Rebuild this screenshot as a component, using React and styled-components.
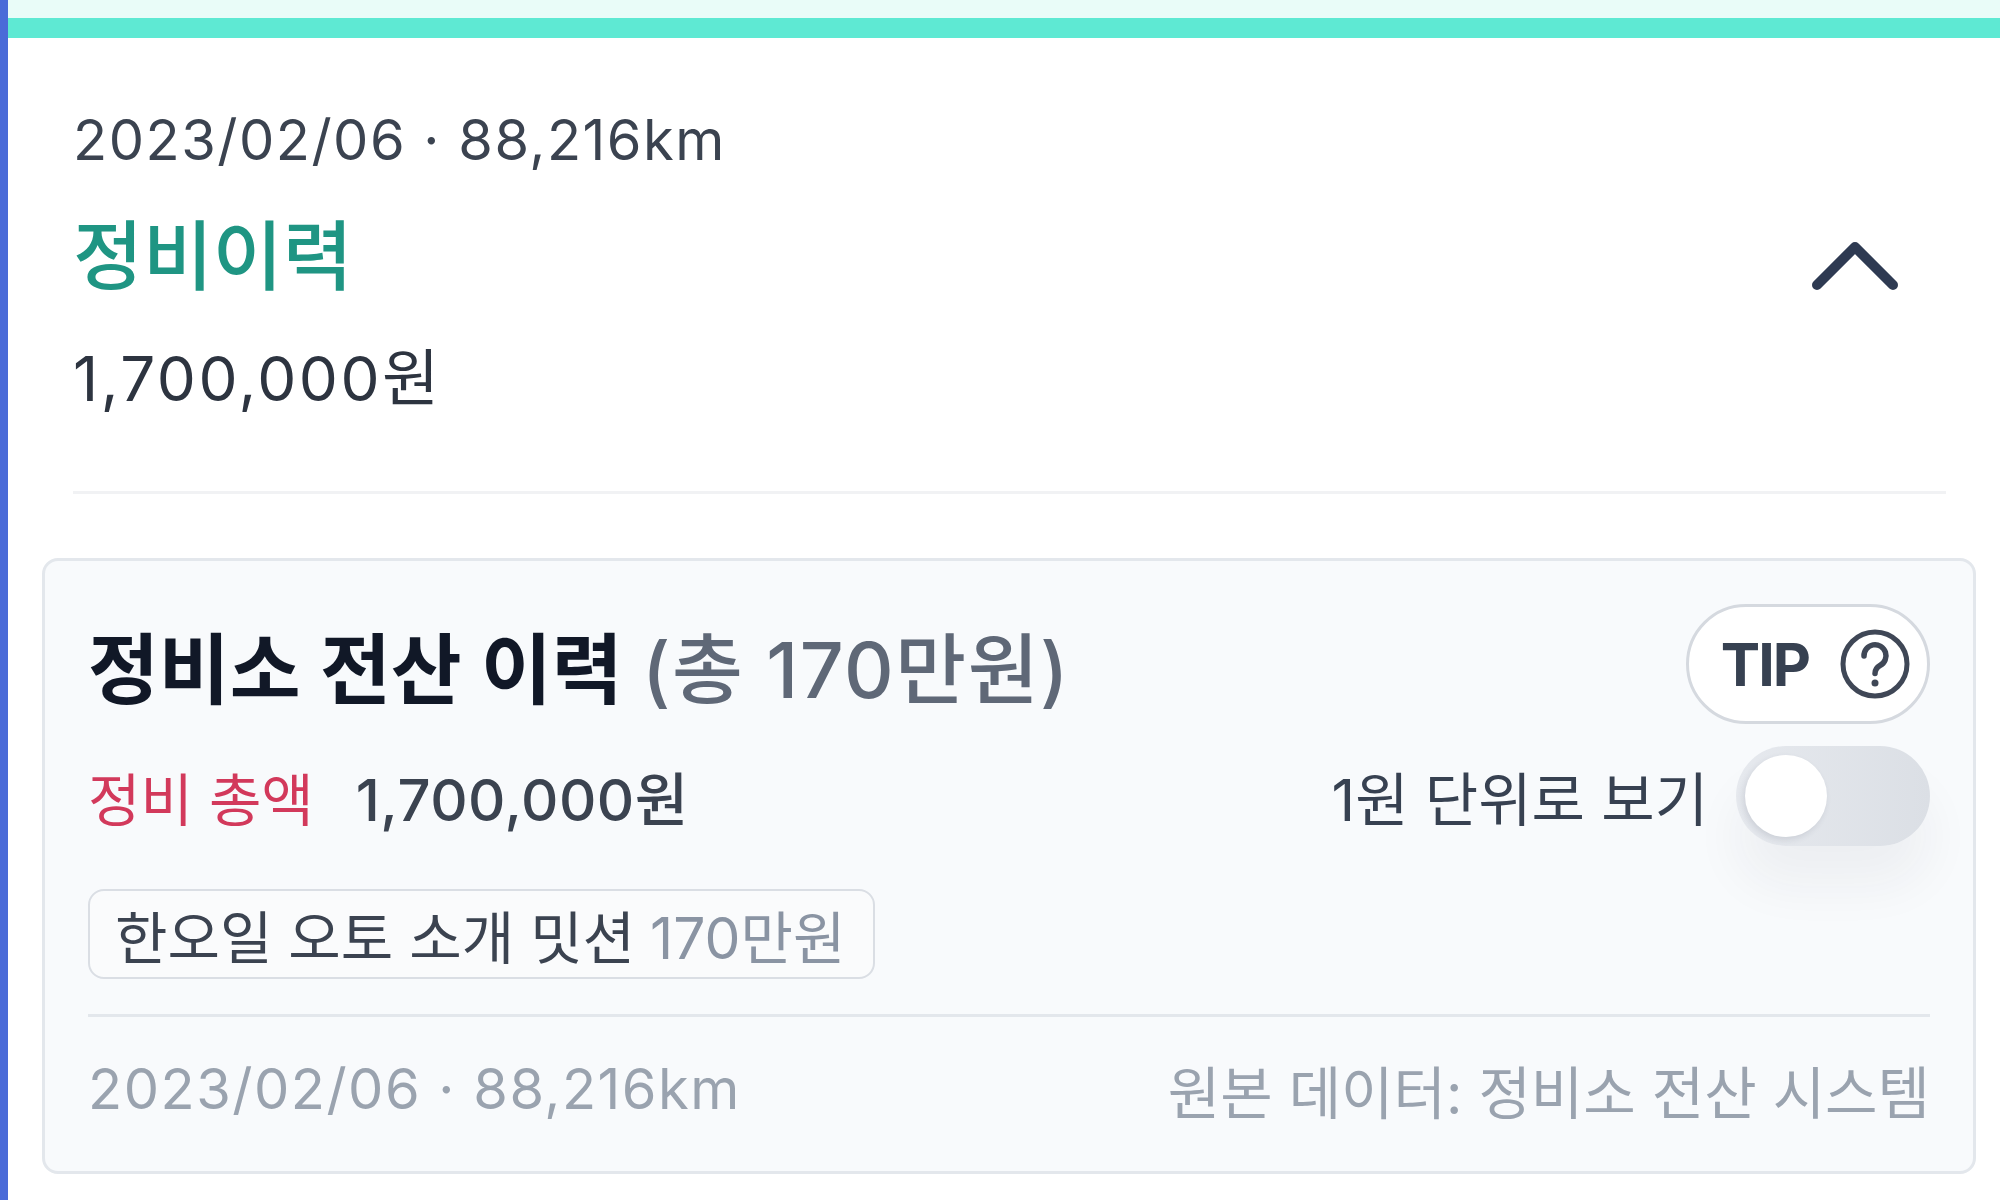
import React, { useState } from "react";
import styled, { createGlobalStyle } from "styled-components";

const GlobalStyle = createGlobalStyle`
  html, body {
    margin: 0;
    padding: 0;
    background: #ffffff;
  }
  body {
    font-family: "Inter", "Noto Sans CJK KR", sans-serif;
    color: #2d3440;
  }
`;

const Page = styled.div`
  min-height: 1200px;
  border-left: 8px solid #4a6bd8;
  box-sizing: border-box;
  background: #ffffff;
`;

const TopStrip = styled.div`
  height: 18px;
  background: #e9fcf8;
  border-bottom: 20px solid #5ee9d3;
`;

const Summary = styled.section`
  padding: 62px 54px 0 65px;
`;

const SummaryRow = styled.div`
  display: flex;
  align-items: center;
  justify-content: space-between;
  margin-top: 21px;
`;

const Meta = styled.div`
  font-size: 56px;
  line-height: 80px;
  color: ${({ $muted }) => ($muted ? "#9aa3af" : "#3b4350")};
  letter-spacing: 1.5px;
`;

const Title = styled.h2`
  margin: 0;
  font-size: 76px;
  line-height: 110px;
  font-weight: 500;
  color: #1f9583;
`;

const Price = styled.div`
  margin-top: 23px;
  font-size: 62px;
  line-height: 90px;
  color: #2d3440;
  letter-spacing: 2.5px;
`;

const Chevron = styled.button`
  display: flex;
  align-items: center;
  justify-content: center;
  padding: 0;
  margin: 20px 48px 0 0;
  border: none;
  background: none;
  cursor: pointer;
`;

const Divider = styled.hr`
  margin: ${({ $gap }) => $gap}px 0 0;
  border: none;
  border-top: 3px solid ${({ $strong }) => ($strong ? "#e3e7ec" : "#f1f2f4")};
`;

const Card = styled.article`
  margin: 64px 24px 0 34px;
  padding: 43px 43px 41px;
  background: #f8fafc;
  border: 3px solid #e3e7ec;
  border-radius: 16px;
`;

const CardHead = styled.div`
  display: flex;
  align-items: center;
  justify-content: space-between;
`;

const CardTitle = styled.h3`
  margin: 0;
  font-size: 77px;
  font-weight: 600;
  color: #111827;
  span {
    color: #5f6877;
    font-weight: 500;
    letter-spacing: 1.5px;
  }
`;

const TipButton = styled.button`
  display: flex;
  align-items: center;
  gap: 30px;
  height: 120px;
  padding: 0 16px 0 32px;
  box-sizing: border-box;
  border: 3px solid #d5d9df;
  border-radius: 60px;
  background: #ffffff;
  font-family: "Inter", sans-serif;
  font-size: 59px;
  font-weight: 700;
  color: #374151;
  letter-spacing: -2px;
  cursor: pointer;
`;

const TotalRow = styled.div`
  display: flex;
  align-items: center;
  justify-content: space-between;
  margin-top: 22px;
`;

const TotalLeft = styled.div`
  display: flex;
  align-items: baseline;
  gap: 42px;
`;

const TotalLabel = styled.span`
  font-size: 57px;
  color: #d2395b;
`;

const TotalValue = styled.span`
  font-size: 58px;
  color: #3b4350;
  font-weight: 500;
  letter-spacing: 0.5px;
`;

const UnitToggle = styled.label`
  display: flex;
  align-items: center;
  gap: 28px;
  font-size: 58px;
  color: #374151;
  cursor: pointer;
`;

const Track = styled.span`
  position: relative;
  display: block;
  width: 194px;
  height: 100px;
  border-radius: 50px;
  background: linear-gradient(90deg, #e6e9ee, #dbdfe5);
  box-shadow: 0 40px 50px rgba(30, 40, 60, 0.05);
`;

const Knob = styled.span`
  position: absolute;
  top: 9px;
  left: ${({ $on }) => ($on ? "103px" : "9px")};
  width: 82px;
  height: 82px;
  border-radius: 50%;
  background: #ffffff;
  box-shadow: -2px 3px 6px rgba(40, 50, 70, 0.12);
  transition: left 0.2s;
`;

const Tag = styled.div`
  display: inline-flex;
  align-items: center;
  height: 90px;
  margin-top: 43px;
  padding: 0 28px 0 25px;
  box-sizing: border-box;
  border: 2px solid #dadee4;
  border-radius: 16px;
  background: #fafbfc;
  font-size: 57px;
  color: #3b4350;
  span {
    margin-left: 15px;
    color: #8a94a3;
  }
`;

const Footer = styled.div`
  display: flex;
  align-items: center;
  justify-content: space-between;
  padding-top: 31px;
`;

const Source = styled.div`
  font-size: 57px;
  color: #9aa3af;
`;

const ChevronUp = () => (
  <svg width="86" height="50" viewBox="0 0 86 50">
    <polyline
      points="5,44 43,6 81,44"
      fill="none"
      stroke="#2e3a52"
      strokeWidth="10"
      strokeLinecap="round"
      strokeLinejoin="round"
    />
  </svg>
);

const QuestionIcon = () => (
  <svg width="72" height="72" viewBox="0 0 72 72">
    <circle cx="36" cy="36" r="32" fill="none" stroke="#3f4756" strokeWidth="5" />
    <path
      d="M25 28 a11 11 0 1 1 16 9.5 c-3.5 2 -5 4 -5 8"
      fill="none"
      stroke="#3f4756"
      strokeWidth="5.5"
      strokeLinecap="round"
    />
    <circle cx="36" cy="55" r="3.5" fill="#3f4756" />
  </svg>
);

export default function App() {
  const [open, setOpen] = useState(true);
  const [wonUnit, setWonUnit] = useState(false);

  return (
    <Page>
      <GlobalStyle />
      <TopStrip />
      <Summary>
        <Meta>2023/02/06 · 88,216km</Meta>
        <SummaryRow>
          <Title>정비이력</Title>
          <Chevron onClick={() => setOpen(!open)} aria-label="접기">
            <ChevronUp />
          </Chevron>
        </SummaryRow>
        <Price>1,700,000원</Price>
        <Divider $gap={67} />
      </Summary>

      {open && (
        <Card>
          <CardHead>
            <CardTitle>
              정비소 전산 이력 <span>(총 170만원)</span>
            </CardTitle>
            <TipButton>
              TIP
              <QuestionIcon />
            </TipButton>
          </CardHead>

          <TotalRow>
            <TotalLeft>
              <TotalLabel>정비 총액</TotalLabel>
              <TotalValue>1,700,000원</TotalValue>
            </TotalLeft>
            <UnitToggle onClick={() => setWonUnit(!wonUnit)}>
              1원 단위로 보기
              <Track>
                <Knob $on={wonUnit} />
              </Track>
            </UnitToggle>
          </TotalRow>

          <Tag>
            한오일 오토 소개 밋션<span>170만원</span>
          </Tag>

          <Divider $strong $gap={35} />

          <Footer>
            <Meta $muted>2023/02/06 · 88,216km</Meta>
            <Source>원본 데이터: 정비소 전산 시스템</Source>
          </Footer>
        </Card>
      )}
    </Page>
  );
}
